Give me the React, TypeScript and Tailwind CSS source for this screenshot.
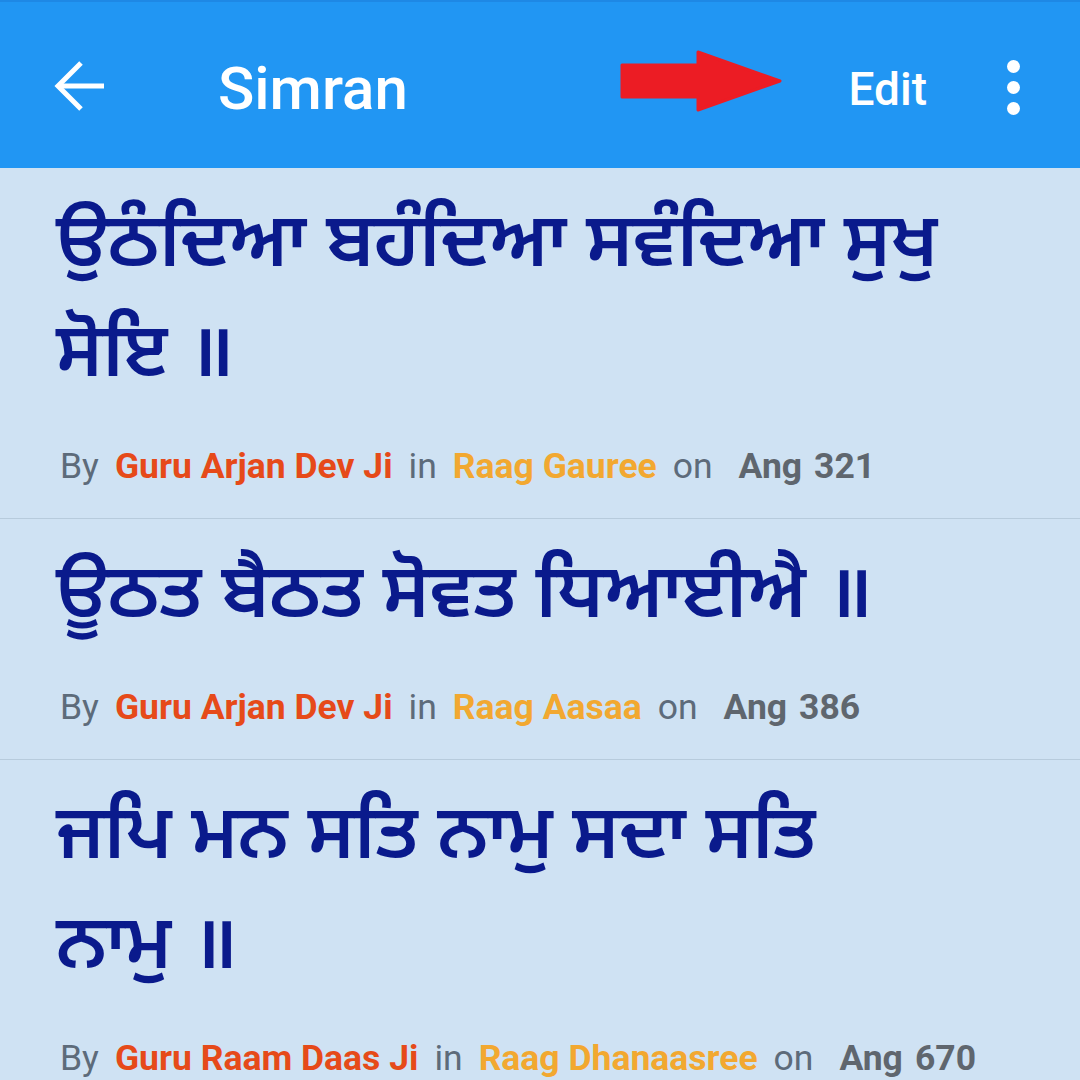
interface Shabad {
  id: number
  text: string
  author: string
  raag: string
  ang: number
}

const shabads: Shabad[] = [
  { id: 1, text: 'ਉਠੰਦਿਆ ਬਹੰਦਿਆ ਸਵੰਦਿਆ ਸੁਖੁ ਸੋਇ ॥', author: 'Guru Arjan Dev Ji', raag: 'Raag Gauree', ang: 321 },
  { id: 2, text: 'ਊਠਤ ਬੈਠਤ ਸੋਵਤ ਧਿਆਈਐ ॥', author: 'Guru Arjan Dev Ji', raag: 'Raag Aasaa', ang: 386 },
  { id: 3, text: 'ਜਪਿ ਮਨ ਸਤਿ ਨਾਮੁ ਸਦਾ ਸਤਿ ਨਾਮੁ ॥', author: 'Guru Raam Daas Ji', raag: 'Raag Dhanaasree', ang: 670 },
]

export default function App() {
  return (
    <main className="w-[1080px] h-[1080px] overflow-hidden bg-[#cfe2f3] font-['Roboto','Liberation_Sans',sans-serif]">
      {/* Toolbar */}
      <div className="h-[168px] bg-[#2196f3] border-t-2 border-[#1e88e5] flex items-center text-white pt-[8px]">
        <svg width="52" height="52" viewBox="0 0 52 52" className="ml-[54px] -mt-[6px]" fill="none" stroke="white" strokeWidth="5">
          <path d="M4 26 H50" />
          <path d="M27 3 L4 26 L27 49" strokeLinejoin="miter" />
        </svg>
        <h1 className="ml-[112px] text-[60px] font-medium leading-none">Simran</h1>
        <div className="flex-1" />
        {/* red pointer arrow */}
        <svg width="170" height="62" viewBox="0 0 170 62" className="mr-[60px] -mt-[16px]">
          <path d="M4 15 H80 V2 L162 31 L80 60 V47 H4 Z" fill="#ec1c24" stroke="#ec1c24" strokeWidth="3" strokeLinejoin="round" />
        </svg>
        <span className="text-[46px] font-medium leading-none">Edit</span>
        <div className="ml-[80px] mr-[60px] flex flex-col gap-[8px] -mt-[4px]">
          <span className="w-[13px] h-[13px] rounded-full bg-white" />
          <span className="w-[13px] h-[13px] rounded-full bg-white" />
          <span className="w-[13px] h-[13px] rounded-full bg-white" />
        </div>
      </div>

      {/* List */}
      <div>
        {shabads.map((s) => (
          <div key={s.id} className="border-b border-[#b7cbdc] pl-[56px] pt-[25px] pb-[32px]">
            <p className="w-[888px] text-[#0a1a8c] text-[75px] leading-[110px] font-semibold font-['Noto_Sans_Gurmukhi','Lohit_Gurmukhi','Noto_Sans',sans-serif]">
              {s.text}
            </p>
            <div className="mt-[33px] text-[35.5px] leading-[40px] flex items-baseline gap-[16px] pl-[4px]">
              <span className="text-[#5d6b7a]">By</span>
              <span className="text-[#e64a19] font-bold">{s.author}</span>
              <span className="text-[#5d6b7a]">in</span>
              <span className="text-[#f2a830] font-bold">{s.raag}</span>
              <span className="text-[#5d6b7a]">on</span>
              <span className="text-[#5f666e] font-bold ml-[10px] flex gap-[12px]">
                <span>Ang</span>
                <span>{s.ang}</span>
              </span>
            </div>
          </div>
        ))}
      </div>
    </main>
  )
}
